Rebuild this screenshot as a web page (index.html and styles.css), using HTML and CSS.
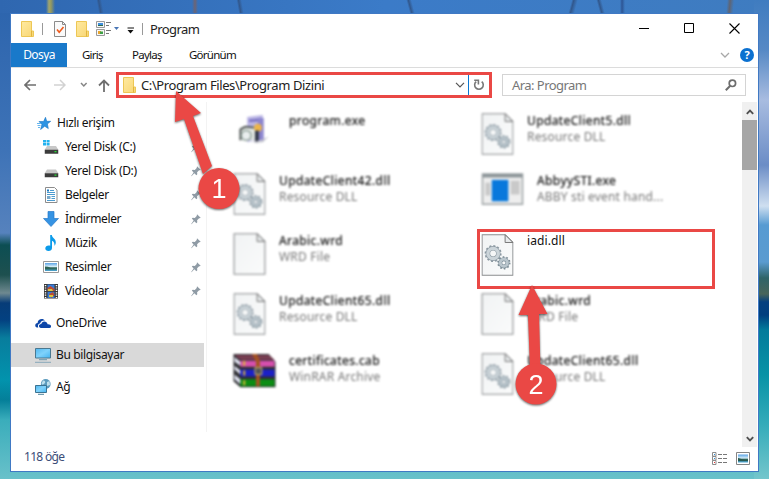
FILE: index.html
```html
<!DOCTYPE html>
<html lang="tr">
<head>
<meta charset="utf-8">
<title>Program</title>
<link rel="stylesheet" href="styles.css">
</head>
<body>
<svg class="defs" aria-hidden="true">
  <defs>
    <linearGradient id="gPage" x2="1" y2="1"><stop offset="0" stop-color="#f1f3f4"/><stop offset="1" stop-color="#fafbfb"/></linearGradient>
    <linearGradient id="gFolder" x2="1" y2="1"><stop offset="0" stop-color="#ffeaa0"/><stop offset="1" stop-color="#f8d674"/></linearGradient>
    <linearGradient id="gScreen" x2="1" y2="1"><stop offset="0" stop-color="#52b7ef"/><stop offset=".5" stop-color="#7fd2fb"/><stop offset="1" stop-color="#43b3f0"/></linearGradient>
    <linearGradient id="gSea" x2="0" y2="1"><stop offset="0" stop-color="#5aa3e6"/><stop offset=".45" stop-color="#d6edf8"/><stop offset=".6" stop-color="#2f665a"/><stop offset="1" stop-color="#4fa8d8"/></linearGradient>
    <symbol id="folder" viewBox="0 0 13 16"><path d="M.5.5h10v9.500h2v5.500H.5z" fill="url(#gFolder)" stroke="#edc755"/><path d="M10.500 10v5.500" stroke="#e0b53e"/></symbol>
    <symbol id="pin" viewBox="0 0 10 11"><path d="M6 .3l3.700 3.400-1 .6-.6-.1-2 2 .2 2-.9 1L3.300 7.200.5 10.300l-.3-.3L2.600 6.600.8 4.600l1-.8 2 .2 1.900-2z" fill="#8f9ba5"/></symbol>
    <symbol id="page" viewBox="0 0 33 43"><path d="M.7.7h23.600l8 8v33.600H.7z" fill="url(#gPage)" stroke="#8a8d8f" stroke-width="1.100"/><path d="M24.300.7v8h8z" fill="#e8ebec" stroke="#777" stroke-width="1"/></symbol>
    <symbol id="gears" viewBox="0 0 33 43">
      <use href="#page" width="33" height="43"/>
      <g fill="none">
        <circle cx="12" cy="20" r="7.700" stroke="#8b98a1" stroke-width="2" stroke-dasharray="2 2.030"/>
        <circle cx="12" cy="20" r="5.300" stroke="#8e9ba4" stroke-width="4.600"/>
        <circle cx="12" cy="20" r="5.300" stroke="#cbd4d9" stroke-width="3.400"/>
        <circle cx="23" cy="29.500" r="5.800" stroke="#7b8b95" stroke-width="2" stroke-dasharray="1.600 2.040"/>
        <circle cx="23" cy="29.500" r="3.700" stroke="#7f8f99" stroke-width="4"/>
        <circle cx="23" cy="29.500" r="3.700" stroke="#bac6cd" stroke-width="2.800"/>
      </g>
    </symbol>
    <symbol id="drive" viewBox="0 0 14 9"><path d="M2.500.5h9L14 4.500H0z" fill="#c8c8c8"/><path d="M0 4.200h14v4H0z" fill="#3c3c3c"/><path d="M10 5.500h2v1.300h-2z" fill="#25e032"/></symbol>
  </defs>
</svg>

<main class="window">
  <header class="titlebar">
    <svg class="tb-folder" viewBox="0 0 13 16"><use href="#folder"/></svg>
    <span class="sep"></span>
    <svg class="tb-check" viewBox="0 0 12 16"><path d="M.5.5h8l3 3v12H.5z" fill="#fafafa" stroke="#8b8b8b"/><path d="M8.500.5v3h3" fill="none" stroke="#8b8b8b"/><path d="M3 8.500l2.200 2.800L9.500 6" fill="none" stroke="#ee5a1c" stroke-width="1.600"/></svg>
    <svg class="tb-new" viewBox="0 0 13 16"><use href="#folder"/></svg>
    <svg class="tb-props" viewBox="0 0 24 15"><path d="M.5.5h8v6h-8zM.5 8.500h8v6h-8z" fill="#f7f7f7" stroke="#9a9a9a"/><path d="M2 2h5v3H2z" fill="#3f8fe0"/><path d="M2 4h5v1H2z" fill="#2d6b4e"/><path d="M2 10h3v3H2z" fill="#e8a52c"/><path d="M4 10.500h3V13H4z" fill="#3da045"/><path d="M10 1.500h5M10 4.500h3M10 9.500h5M10 12.500h3" stroke="#777"/><path d="M18 6h5l-2.500 3z" fill="#4775b5"/></svg>
    <svg class="tb-more" viewBox="0 0 7 7"><path d="M.5.500h6.500v1H.5zM.5 3h6L3.500 6.500z" fill="#111"/></svg>
    <span class="sep sep-last"></span>
    <h1 class="title">Program</h1>
    <svg class="min" viewBox="0 0 11 11"><path d="M0 5.500h10" stroke="#000"/></svg>
    <svg class="max" viewBox="0 0 11 11"><path d="M.5.500h9v9H.5z" fill="none" stroke="#000"/></svg>
    <svg class="close" viewBox="0 0 11 11"><path d="M.5.500l10 10M10.500.5l-10 10" stroke="#000" stroke-width="1.100"/></svg>
  </header>

  <nav class="tabs">
    <span class="tab active">Dosya</span>
    <span class="tab giris">Giriş</span>
    <span class="tab paylas">Paylaş</span>
    <span class="tab gorunum">Görünüm</span>
    <svg class="expand" viewBox="0 0 10 6"><path d="M1 1l4 4 4-4" fill="none" stroke="#a8a8a8" stroke-width="1.300"/></svg>
    <span class="help">?</span>
  </nav>

  <div class="toolbar">
    <svg class="back" viewBox="0 0 12 12"><path d="M12 6H1.500M6 1L1 6l5 5" fill="none" stroke="#6f6f6f" stroke-width="1.700"/></svg>
    <svg class="forward" viewBox="0 0 12 12"><path d="M0 6h10.500M6 1l5 5-5 5" fill="none" stroke="#d2d2d2" stroke-width="1.500"/></svg>
    <svg class="recent" viewBox="0 0 8 6"><path d="M1 1l2.800 3L6.600 1" fill="none" stroke="#858585" stroke-width="1.500"/></svg>
    <svg class="up" viewBox="0 0 12 13"><path d="M6 13V1.500M1 6.500l5-5 5 5" fill="none" stroke="#6f6f6f" stroke-width="1.800"/></svg>
    <div class="address">
      <svg class="addr-folder" viewBox="0 0 13 16"><use href="#folder"/></svg>
      <span class="path">C:\Program Files\Program Dizini</span>
      <svg class="drop" viewBox="0 0 10 6"><path d="M1 .800l4 4 4-4" fill="none" stroke="#555" stroke-width="1.200"/></svg>
      <span class="refresh"><svg viewBox="0 0 12 12"><path d="M8.700 2.600A4.300 4.300 0 1 1 3.200 2.600" fill="none" stroke="#777" stroke-width="1.600"/><path d="M1.200 1.200h4.200v4.200" fill="none" stroke="#777" stroke-width="1.600"/></svg></span>
    </div>
    <div class="search">
      <span class="search-text">Ara: Program</span>
      <svg viewBox="0 0 12 12"><circle cx="7.400" cy="4.300" r="3.200" fill="none" stroke="#6d6d6d" stroke-width="1.700"/><path d="M5 7L.8 11.200" stroke="#6d6d6d" stroke-width="2"/></svg>
    </div>
  </div>

  <div class="content">
    <aside class="sidebar">
      <div class="item top"><svg class="i-star" viewBox="0 0 14 13"><path d="M8.500.300l1.200 4h4l-3.300 2.600.9 4.700L7.700 9.200 3.600 12.500l1.300-5L2 4.500h4.600z" fill="#2d94e3" stroke="#1976c4" stroke-width=".6"/><path d="M0 6.500h4M.5 8.500h3M1 10.500h2" stroke="#65b6ef"/></svg><span>Hızlı erişim</span></div>
      <div class="item"><svg class="i" viewBox="0 0 16 16"><path d="M0 1h3v2.500H0zM3.600 1h3v2.500h-3zM0 4.100h3v2.500H0zM3.600 4.100h3v2.500h-3z" fill="#22b2ef"/><use href="#drive" x="1.500" y="6.500" width="14" height="9"/></svg><span>Yerel Disk (C:)</span><svg class="pin"><use href="#pin"/></svg></div>
      <div class="item"><svg class="i" viewBox="0 0 16 16"><use href="#drive" x="1.500" y="6" width="14" height="9"/></svg><span>Yerel Disk (D:)</span><svg class="pin"><use href="#pin"/></svg></div>
      <div class="item"><svg class="i" viewBox="0 0 16 16"><path d="M2.500.5h9l2.500 2.500v12.500H2.500z" fill="#fff" stroke="#8c8c8c"/><path d="M7 3.500h4M4 5.500h8M4 7.500h8M8.500 9.500H12M8.500 11.500H12M4 13.500h8" stroke="#4b9bd0"/><path d="M4 9h3.500v3H4z" fill="#78a9ca"/><path d="M4 2.500h2v2H4z" fill="#1d79bd"/></svg><span>Belgeler</span><svg class="pin"><use href="#pin"/></svg></div>
      <div class="item"><svg class="i" viewBox="0 0 16 16"><path d="M5 .5h6v7h4.500L8 15.500.5 7.500H5z" fill="#3593e3" stroke="#2679c8" stroke-width=".7"/></svg><span>İndirmeler</span><svg class="pin"><use href="#pin"/></svg></div>
      <div class="item"><svg class="i" viewBox="0 0 16 16"><path d="M7.200 0h1.600c.3 3 4.200 3.500 4 7.500 0 1.500-.8 2.700-1.400 3.200.4-2-.5-4.200-2.400-5V13c0 1.800-1.500 3-3.500 3S2.300 15 2.300 13.500c0-1.700 1.500-3 3.300-3 .7 0 1.200.1 1.600.3z" fill="#0b9bea"/></svg><span>Müzik</span><svg class="pin"><use href="#pin"/></svg></div>
      <div class="item"><svg class="i" viewBox="0 0 16 16"><path d="M.5 2.500h15v11H.5z" fill="#fff" stroke="#999"/><path d="M2 4h12v8H2z" fill="url(#gSea)"/><path d="M2 7.500l3 .3 3 1.500 6 .2v.8H2z" fill="#2f6557"/></svg><span>Resimler</span><svg class="pin"><use href="#pin"/></svg></div>
      <div class="item"><svg class="i" viewBox="0 0 16 16"><path d="M1 1h14v14.500H1z" fill="#383838"/><path d="M4.500 1.500h7v6.500h-7zM4.500 8.700h7v6.300h-7z" fill="#367bd8"/><path d="M4.500 5l3-2 4 3v2h-7zM6 11l4-2 1.500 3-3 3z" fill="#bf4b2f"/><path d="M5 6h4l1 2H5zM6 12h4v2H6z" fill="#d6c640"/><path d="M2.500 2v13M13.500 2v13" stroke="#fff" stroke-width="1.500" stroke-dasharray="1.200 1.200"/></svg><span>Videolar</span><svg class="pin"><use href="#pin"/></svg></div>
      <div class="item root one"><svg class="i" viewBox="0 0 16 16"><path d="M2 12.500C-.8 12 0 8 2.600 8c0-4 5.400-5.500 7.400-2.300-2.500-.5-4.200.5-4.700 2.500-2.200.5-2.800 2.500-2 4.300z" fill="#0d47a9"/><path d="M6 13c-3-.2-2.500-4.200.3-4 .5-3.700 6-3.300 6.300.3 4-.5 4.500 3.500 1.800 3.700z" fill="#0d47a9"/></svg><span>OneDrive</span></div>
      <div class="item root selected"><svg class="i" viewBox="0 0 16 16"><path d="M.5 1.500h15v9.500H.5z" fill="url(#gScreen)" stroke="#4a7890"/><path d="M4 12.700h8" stroke="#6c98ad"/><path d="M0 15.300h16" stroke="#86a7b8"/></svg><span>Bu bilgisayar</span></div>
      <div class="item root net"><svg class="i" viewBox="0 0 16 16"><circle cx="10.700" cy="5" r="4.900" fill="#5b9bbd"/><path d="M8 1.500c2 0 3 1.500 1.500 3S7 6 6.500 4.500zM12 3l2.500-1 .5 4-3 1z" fill="#bee0ed"/><path d="M.5 6.500h11v7H.5z" fill="url(#gScreen)" stroke="#3b7392"/><path d="M3 15.300h6" stroke="#4b829c"/></svg><span>Ağ</span></div>
    </aside>

    <section class="files">
      <div class="file"><svg class="soft icon wide" viewBox="0 0 43 43"><path d="M14 4l16-2v24l-16 4z" fill="#b9b4e4"/><path d="M16 8l12-1" stroke="#6b63bb" stroke-width="2"/><path d="M25 5h6v23h-7z" fill="#8d86cf"/><path d="M7 14h17v14H7z" fill="#e1e6e2"/><path d="M7 28V17l5-3 9 1" fill="none" stroke="#484d4d" stroke-width="1.800"/><circle cx="13" cy="23" r="5" fill="#e9eeee" stroke="#93a49d" stroke-width="1.500"/><circle cx="25" cy="15" r="4" fill="#edb54a"/><path d="M22 18h4v12h-4z" fill="#353a4a"/><path d="M28 28l8-4-6 6H18z" fill="#bfc0cb"/></svg><div class="label soft"><b>program.exe</b></div></div>
      <div class="file"><svg class="icon soft"><use href="#gears"/></svg><div class="label soft"><b>UpdateClient5.dll</b><i>Resource DLL</i></div></div>

      <div class="file"><svg class="icon soft"><use href="#gears"/></svg><div class="label soft"><b>UpdateClient42.dll</b><i>Resource DLL</i></div></div>
      <div class="file"><svg class="soft icon wide" viewBox="0 0 43 43"><path d="M1 1h41v31H1z" fill="#eee" stroke="#9da3a5" stroke-width="1.500"/><path d="M1 1h41v3.500H1z" fill="#8d9699"/><path d="M10.500 7h17v22h-17z" fill="#0878dc"/><path d="M4 10h5v13H4zM30 8h9v14h-9z" fill="#c9c9c9"/></svg><div class="label soft"><b>AbbyySTI.exe</b><i>ABBY sti event hand...</i></div></div>

      <div class="file"><svg class="icon soft"><use href="#page"/></svg><div class="label soft"><b>Arabic.wrd</b><i>WRD File</i></div></div>
      <div class="file target"><svg class="icon"><use href="#gears"/></svg><div class="label"><b>iadi.dll</b></div></div>

      <div class="file"><svg class="icon soft"><use href="#gears"/></svg><div class="label soft"><b>UpdateClient65.dll</b><i>Resource DLL</i></div></div>
      <div class="file"><svg class="icon soft"><use href="#page"/></svg><div class="label soft"><b>Arabic.wrd</b><i>WRD File</i></div></div>

      <div class="file"><svg class="soft icon wide" viewBox="0 0 43 43"><path d="M0 1h36l7 8v26H7L0 29z" fill="#303034"/><path d="M1 2h35l6 5H7z" fill="#793d52"/><path d="M7 8h35v6H7z" fill="#d64fad"/><path d="M7 17h35v7H7z" fill="#1b20c7"/><path d="M7 27h35v7H7z" fill="#0b8d13"/><path d="M1 4l6 5v4L1 9zM1 13l6 5v4l-6-5zM1 22l6 5v5l-6-5z" fill="#dfe2f0"/><path d="M24 1l3 7v26h-4V9l-4-8z" fill="#a45323"/><path d="M22 15h7v7h-7z" fill="#555" stroke="#c7b36c"/><path d="M11 8v5M11 18v5M11 28v5" stroke="#d9b939" stroke-width="2"/></svg><div class="label soft"><b>certificates.cab</b><i>WinRAR Archive</i></div></div>
      <div class="file"><svg class="icon soft"><use href="#gears"/></svg><div class="label soft"><b>UpdateClient65.dll</b><i>Resource DLL</i></div></div>
    </section>

    <div class="scrollbar">
      <svg viewBox="0 0 8 6"><path d="M.8 4.800L4 1.600l3.200 3.200" fill="none" stroke="#505050" stroke-width="1.900"/></svg>
      <span class="thumb"></span>
      <svg class="down" viewBox="0 0 8 6"><path d="M.8 1.200L4 4.400l3.200-3.200" fill="none" stroke="#505050" stroke-width="1.900"/></svg>
    </div>
  </div>

  <footer class="status">
    <span class="count">118 öğe</span>
    <svg class="details" viewBox="0 0 16 13"><path d="M.5.5h3.500v3.700H.5zM.5 4.500h3.500v3.700H.5zM.5 8.500h3.500v4H.5z" fill="#fff" stroke="#8c8c8c"/><path d="M2 2h1v1H2zM2 6h1v1H2z" fill="#2a91db"/><path d="M2 10h1v1H2z" fill="#e33"/><path d="M6 2.500h4M11 2.500h4M6 6.500h4M11 6.500h4M6 10.500h4M11 10.500h4" stroke="#777"/></svg>
    <svg class="large" viewBox="0 0 14 13"><path d="M.5.500h13v12H.5z" fill="#fff" stroke="#858585"/><path d="M2 2.500h10v8H2z" fill="url(#gSea)"/><path d="M2 6l5 1.500 5 .5v1H2z" fill="#28594f"/></svg>
  </footer>
</main>

<svg class="callouts" viewBox="0 0 769 479">
  <g fill="#ea4845">
    <path d="M176 91l25 22-8 3 19 50-9 8-19-55-9 3z"/>
    <circle cx="219" cy="188.500" r="20.500"/>
    <path d="M532 285l15.500 29h-8.500l1.500 56h-10.500l-2-55h-9.500z"/>
    <circle cx="536" cy="384" r="20.500"/>
  </g>
  <text x="219" y="198" class="num">1</text>
  <text x="536" y="393.500" class="num">2</text>
</svg>
</body>
</html>
```
FILE: styles.css
```css
* { box-sizing: border-box; }
html, body { margin: 0; height: 100%; overflow: hidden; }
body {
  font: 12px/16px "Noto Sans", "Open Sans", sans-serif;
  color: #111;
  padding: 13px 10px 7px;
  background:
    linear-gradient(90deg, transparent 46px, #a1a66e 49px, #94985f 51px, transparent 55px) 0 0 / 100px 13px no-repeat,
    linear-gradient(80deg, transparent 48px, #31578c 50px, transparent 53px) 50px 0 / 100px 13px no-repeat,
    linear-gradient(90deg, transparent 42px, #6d6473 45px, transparent 48px) 150px 0 / 60px 13px no-repeat,
    linear-gradient(80deg, transparent 48px, #31578c 50px, transparent 53px) 190px 0 / 100px 13px no-repeat,
    linear-gradient(75deg, transparent 48px, #31578c 50px, transparent 53px) 360px 0 / 100px 13px no-repeat,
    linear-gradient(105deg, transparent 50px, #31578c 52px, transparent 56px) 520px 0 / 100px 13px no-repeat,
    linear-gradient(75deg, transparent 50px, #31578c 52px, transparent 55px) 548px 0 / 80px 13px no-repeat,
    linear-gradient(90deg, transparent 50px, #2d5594 52px, transparent 55px) 570px 0 / 80px 13px no-repeat,
    linear-gradient(95deg, transparent 50px, #5f6473 53px, transparent 57px) 677px 0 / 80px 13px no-repeat,
    linear-gradient(#3f7cc0 0, #5689c5 50px, #a8bce0 100px, #6b8dc6 165px, #cfdff0 206px, #579bd2 225px, #5a9bd0 262px, #2f6468 278px, #48655a 294px, #04407f 302px, #003f7f 315px, #027b9b 330px, #0893a6 375px, #35acba 425px, #74c6cc 479px) 100% 0 / 15px 100% no-repeat,
    linear-gradient(to right, #2f67b0, #3b7bc8 50%, #3f7cc0) 0 0 / 100% 13px no-repeat,
    linear-gradient(#2c64ad 0, #3e73b7 150px, #5682bd 233px, #0c4e53 245px, #1e504f 275px, #6f8990 293px, #073c78 303px, #034181 320px, #087d9d 338px, #0293ad 380px, #047f99 400px, #3aadbb 420px, #69c1ca 479px);
}
svg { display: block; flex: none; }
.defs { position: absolute; width: 0; height: 0; }
span, b, i { white-space: nowrap; }

.window { display: flex; flex-direction: column; width: 749px; height: 459px; border: 1px solid #4079c4; background: #fff; }

.titlebar { display: flex; align-items: center; height: 29px; padding: 0 18px 0 10px; }
.tb-folder, .tb-new, .addr-folder { width: 13px; height: 16px; }
.sep { width: 1px; height: 12px; margin-left: 8px; background: #999; }
.tb-check { width: 12px; height: 16px; margin-left: 11px; }
.tb-new { margin-left: 10px; }
.tb-props { width: 24px; height: 15px; margin-left: 7px; }
.tb-more { width: 7px; height: 7px; margin: 3px 0 0 7px; }
.sep-last { margin-left: 8px; }
.title { margin: 0 auto 0 7px; font: 13px/18px "Noto Sans", sans-serif; letter-spacing: -.6px; color: #222; }
.min, .max, .close { width: 11px; height: 11px; }
.max, .close { margin-left: 34px; }

.tabs { display: flex; align-items: center; height: 25px; border-bottom: 1px solid #dcdcdc; padding-right: 4px; }
.tab { font-size: 11.5px; line-height: 24px; letter-spacing: -.75px; }
.tab.active { width: 56px; height: 24px; text-align: center; background: #1979ca; color: #fff; font-size: 12px; letter-spacing: -.6px; }
.giris { margin-left: 15px; width: 21px; }
.paylas { margin-left: 29px; width: 29px; }
.gorunum { margin-left: 28px; }
.expand { width: 10px; height: 6px; margin-left: auto; }
.help { width: 14px; height: 14px; margin-left: 10px; border-radius: 50%; background: #0a70d0; color: #fff; text-align: center; font-weight: 700; font-size: 11px; line-height: 14px; }

.toolbar { display: flex; align-items: center; height: 34px; padding: 0 12px 0 13px; }
.back, .forward { width: 12px; height: 12px; }
.forward { margin-left: 18px; }
.recent { width: 8px; height: 6px; margin-left: 14px; }
.up { width: 12px; height: 13px; margin-left: 10px; }
.address { display: flex; align-items: center; width: 376px; height: 26px; margin-left: 6px; padding-left: 4px; border: 3px solid #ea4845; }
.path { margin-left: 5px; font-size: 13px; letter-spacing: -.4px; color: #222; }
.drop { width: 10px; height: 6px; margin-left: auto; }
.refresh { display: grid; place-items: center; width: 21px; height: 20px; margin-left: 3px; border-left: 1px solid #0a78d4; }
.refresh svg { width: 12px; height: 12px; }
.search { display: flex; align-items: center; justify-content: space-between; width: 244px; height: 22px; margin-left: 10px; padding: 0 8px 0 9px; border: 1px solid #d4d4d4; }
.search-text { font-size: 13px; letter-spacing: -.55px; color: #777; }
.search svg { width: 12px; height: 12px; }

.content { display: flex; height: 345px; }
.sidebar { width: 196px; height: 330px; padding-top: 9px; border-right: 1px solid #f3f3f3; }
.item { display: flex; align-items: center; width: 193px; height: 24px; padding-left: 32px; letter-spacing: -.35px; }
.item .i { width: 16px; height: 16px; margin-right: 6px; }
.item.top { padding-left: 26px; }
.i-star { width: 14px; height: 13px; margin-right: 6px; }
.pin { width: 10px; height: 11px; margin: 0 3px 0 auto; }
.root { padding-left: 24px; }
.root .i { margin-right: 5px; }
.one { margin-top: 8px; }
.selected { margin-top: 8px; background: #d9d9d9; }
.net { margin-top: 8px; }

.files { display: grid; grid-template-columns: 248px 248px; grid-auto-rows: 60px; width: 535px; padding: 10px 0 0 25px; }
.file { display: flex; }
.icon { width: 35px; height: 44px; padding: 1px; }
.icon.wide { width: 45px; }
.label { display: flex; flex-direction: column; margin: 1px 0 0 12px; line-height: 16px; }
.label b { font-weight: 400; letter-spacing: .4px; }
.label i { font-style: normal; letter-spacing: .18px; color: #777; }
.soft { filter: blur(1.2px); }
.label.soft b { color: #111; -webkit-text-stroke: .2px #111; }
.target { width: 238px; height: 60px; margin: -3px 0 0 -3px; padding: 1px 0 0; border: 3px solid #ea4845; }
.target .label { margin: 0 0 0 12px; }
.target b { letter-spacing: .1px; }

.scrollbar { display: flex; flex-direction: column; align-items: center; width: 15px; height: 345px; margin-left: auto; margin-right: 1px; padding-top: 7px; background: #f0f0f0; }
.scrollbar svg { width: 8px; height: 6px; }
.thumb { width: 15px; height: 50px; margin-top: 5px; background: #a6a6a6; }
.down { margin: auto 0 5px; }

.status { display: flex; align-items: center; height: 24px; padding: 0 8px 2px 13px; }
.count { margin-right: auto; margin-top: -2px; font-size: 12px; letter-spacing: -.7px; color: #3b4d78; }
.details { width: 16px; height: 13px; }
.large { width: 14px; height: 13px; margin-left: 8px; }

.callouts { position: absolute; inset: 0; width: 769px; height: 479px; pointer-events: none; filter: drop-shadow(0 1px 1px rgba(0, 0, 0, .6)); }
.num { font: 27px "Liberation Sans", sans-serif; fill: #fff; text-anchor: middle; }
```
